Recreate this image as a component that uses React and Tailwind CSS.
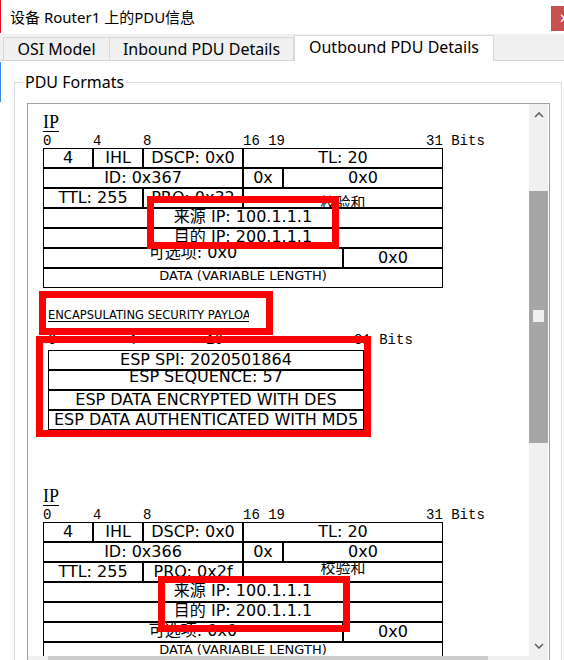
import React from "react";

const SANS = "font-['DejaVu_Sans','Noto_Sans_CJK_SC',sans-serif]";

function C({ w, size = "text-[16px] leading-[18px]", align = "items-center", className = "", children }) {
  return (
    <div
      className={`${w} h-[20px] shrink-0 border border-black flex ${align} justify-center overflow-hidden whitespace-nowrap ${size} ${className}`}
    >
      {children}
    </div>
  );
}

function Chevron({ up }) {
  return (
    <svg width="10" height="6" viewBox="0 0 10 6">
      <polyline
        points={up ? "1,5 5,1 9,5" : "1,1 5,5 9,1"}
        fill="none"
        stroke="#606060"
        strokeWidth="1.6"
      />
    </svg>
  );
}

function IPBlock({ id, pro, first }) {
  return (
    <div className="pl-[15px]">
      <div className="h-[20px] font-['Liberation_Serif',serif] text-[18px] leading-[20px] underline underline-offset-[3px] text-black">
        IP
      </div>
      <div className="mt-[1px] h-[15px] flex font-['Liberation_Mono',monospace] text-[14px] leading-[17px] whitespace-pre text-black">
        <span className="w-[50px]">0</span>
        <span className="w-[50px]">4</span>
        <span className="w-[100px]">8</span>
        <span className="w-[183px]">16 19</span>
        <span>31 Bits</span>
      </div>
      <div className={`w-[400px] flex flex-col text-black ${SANS}`}>
        <div className="flex">
          <C w="w-[50px]">4</C>
          <C w="w-[50px]">IHL</C>
          <C w="w-[100px]">DSCP: 0x0</C>
          <C w="w-[200px]">TL: 20</C>
        </div>
        <div className="flex">
          <C w="w-[200px]">ID: {id}</C>
          <C w="w-[40px]">0x</C>
          <C w="w-[160px]">0x0</C>
        </div>
        <div className="flex">
          <C w="w-[100px]">TTL: 255</C>
          <C w="w-[100px]">PRO: {pro}</C>
          {first ? (
            <C w="w-[200px]" align="items-start" size="text-[15px] leading-[16px]" className="pt-[6px]">
              校验和
            </C>
          ) : (
            <C w="w-[200px]" align="items-start" size="text-[15px] leading-[16px]">
              <span className="-mt-[3px]">校验和</span>
            </C>
          )}
        </div>
        <div className="flex">
          <C w="w-[400px]" className="pb-[3px]">来源 IP: 100.1.1.1</C>
        </div>
        <div className="flex">
          <C w="w-[400px]" className="pb-[3px]">目的 IP: 200.1.1.1</C>
        </div>
        <div className="flex">
          {first ? (
            <C w="w-[300px]" className="pb-[11px]">可选项: 0x0</C>
          ) : (
            <C w="w-[300px]" className="pb-[2px]">可选项: 0x0</C>
          )}
          <C w="w-[100px]">0x0</C>
        </div>
        <div className="flex">
          <C w="w-[400px]" size="text-[13px] leading-[15px]" className="pb-[5px]">
            DATA (VARIABLE LENGTH)
          </C>
        </div>
      </div>
    </div>
  );
}

function RedBox({ className }) {
  return (
    <div className={`absolute border-[7px] border-[#ff0000] pointer-events-none ${className}`} />
  );
}

export default function App() {
  return (
    <div className="relative w-[564px] h-[660px] overflow-hidden bg-white font-['Noto_Sans','Noto_Sans_CJK_SC',sans-serif] text-black">
      {/* edges of neighbouring windows */}
      <div className="absolute left-0 top-0 w-[1px] h-[33px] bg-[#e81123]" />
      <div className="absolute left-0 top-[62px] w-[1px] h-[40px] bg-[#3c8ce0]" />

      {/* title bar */}
      <div className="h-[34px] flex justify-between">
        <div className="pl-[10px] flex items-center text-[15px] leading-[20px]">
          设备 Router1 上的PDU信息
        </div>
        <div className="mt-[6px] w-[13px] h-[25px] bg-[#c75050] overflow-hidden">
          <div className="pl-[8px] text-white text-[13px] leading-[25px] whitespace-nowrap">✕</div>
        </div>
      </div>

      {/* tab strip */}
      <div className="h-[27px] bg-[#f0f0f0] border-b border-[#d9d9d9] flex items-end pl-[3px] text-[16px]">
        <div className="w-[107px] h-[23px] border border-b-0 border-[#d9d9d9] flex items-center justify-center leading-[20px]">
          OSI Model
        </div>
        <div className="w-[184px] h-[23px] border border-l-0 border-b-0 border-[#d9d9d9] flex items-center justify-center leading-[20px]">
          Inbound PDU Details
        </div>
        <div className="w-[200px] h-[26px] -mb-[1px] bg-white border border-b-0 border-[#d9d9d9] flex items-center justify-center pb-[3px] leading-[20px]">
          Outbound PDU Details
        </div>
      </div>

      {/* group box */}
      <div className="relative mt-[21px] ml-[14px] w-[548px] h-[640px] border border-[#dcdcdc]">
        <div className="absolute -top-[12px] left-[8px] bg-white px-[2px] text-[16px] leading-[22px]">
          PDU Formats
        </div>

        {/* scroll view */}
        <div className="mt-[20px] ml-[12px] w-[523px] border border-[#a0a0a0] flex flex-col">
          <div className="flex h-[552px]">
            <div className="relative w-[501px] h-[552px] overflow-hidden bg-white">
              <div className="pt-[8px]">
                <IPBlock id="0x367" pro="0x32" first />

                <div className="pl-[20px]">
                  <div className={`mt-[21px] w-[201px] h-[13px] overflow-hidden whitespace-nowrap text-[11.5px] leading-[13px] underline underline-offset-[2px] ${SANS}`}>
                    ENCAPSULATING SECURITY PAYLOAD
                  </div>
                  <div className="mt-[10px] h-[15px] flex font-['Liberation_Mono',monospace] text-[14px] leading-[17px] whitespace-pre">
                    <span className="w-[80px]">0</span>
                    <span className="w-[78px]">4</span>
                    <span className="w-[148px]">16</span>
                    <span>31 Bits</span>
                  </div>
                  <div className={`mt-[3px] w-[316px] flex flex-col ${SANS}`}>
                    <C w="w-[316px]">ESP SPI: 2020501864</C>
                    <C w="w-[316px]" className="pb-[7px]">ESP SEQUENCE: 57</C>
                    <C w="w-[316px]">ESP DATA ENCRYPTED WITH DES</C>
                    <C w="w-[316px]">ESP DATA AUTHENTICATED WITH MD5</C>
                  </div>
                </div>

                <div className="mt-[56px]">
                  <IPBlock id="0x366" pro="0x2f" />
                </div>
              </div>

              {/* annotation boxes */}
              <RedBox className="left-[119px] top-[92px] w-[192px] h-[53px]" />
              <RedBox className="left-[11px] top-[187px] w-[234px] h-[44px]" />
              <RedBox className="left-[8px] top-[232px] w-[335px] h-[101px]" />
              <RedBox className="left-[130px] top-[472px] w-[192px] h-[56px]" />
            </div>

            {/* vertical scrollbar */}
            <div className="w-[19px] h-[552px] bg-[#f0f0f0] flex flex-col">
              <div className="h-[21px] flex items-center justify-center">
                <Chevron up />
              </div>
              <div className="h-[66px]" />
              <div className="h-[252px] bg-[#a6a6a6] pt-[119px] flex justify-center">
                <div className="w-[11px] h-[12px] bg-[#f0f0f0]" />
              </div>
              <div className="flex-1" />
              <div className="h-[21px] flex items-center justify-center">
                <Chevron />
              </div>
            </div>
          </div>

          {/* horizontal scrollbar */}
          <div className="flex h-[17px]">
            <div className="w-[501px] bg-[#f0f0f0] pl-[20px]">
              <div className="w-[440px] h-full bg-[#cdcdcd]" />
            </div>
            <div className="w-[19px] bg-[#f0f0f0]" />
          </div>
        </div>
      </div>
    </div>
  );
}
